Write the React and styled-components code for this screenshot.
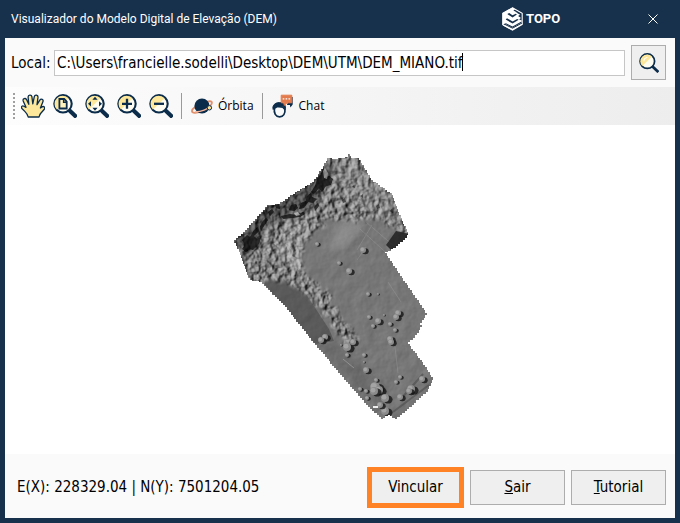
import React, { useLayoutEffect, useRef, useState } from 'react';
import styled, { createGlobalStyle } from 'styled-components';

const NAVY = '#17304b';
const INK = '#0b2c4a';
const CREAM = '#fde79b';

const GlobalStyle = createGlobalStyle`
  * {
    box-sizing: border-box;
  }
  body {
    margin: 0;
    background: ${NAVY};
    color: #000;
    font-family: 'DejaVu Sans Condensed', 'DejaVu Sans', sans-serif;
    font-stretch: condensed;
    font-size: 15px;
  }
  button, input {
    font: inherit;
    color: inherit;
  }
  svg {
    display: block;
  }
`;

const Window = styled.div`
  display: flex;
  flex-direction: column;
  min-height: 100vh;
  padding: 0 5px 5px;
  background: ${NAVY};
`;

const TitleBar = styled.header`
  display: flex;
  align-items: center;
  height: 38px;
  padding: 0 12px 0 6px;
  color: #fff;
`;

const Title = styled.h1`
  flex: 1;
  margin: 0;
  font: 400 12px/16px Roboto, sans-serif;
`;

const Brand = styled.div`
  display: flex;
  align-items: center;
  gap: 3px;
  width: 61px;
  margin-right: 80px;
  font: 700 13px/16px Roboto, sans-serif;
`;

const CloseButton = styled.button`
  display: grid;
  place-items: center;
  width: 20px;
  height: 20px;
  padding: 0;
  border: 0;
  background: none;
  color: #fff;
`;

const PathForm = styled.form`
  display: flex;
  align-items: center;
  gap: 6px;
  height: 49px;
  padding: 0 9px 0 6px;
  background: #fafafa;
`;

const PathLabel = styled.label`
  width: 37px;
  white-space: nowrap;
`;

const PathField = styled.div`
  position: relative;
  flex: 1;
  display: flex;
`;

const PathInput = styled.input`
  flex: 1;
  min-width: 0;
  height: 26px;
  padding: 0 2px;
  border: 1px solid #c6c6c6;
  background: #fff;
  outline: none;
  caret-color: transparent;
`;

const Caret = styled.span`
  position: absolute;
  top: 3px;
  width: 1px;
  height: 18px;
  background: #000;
  pointer-events: none;
`;

const Button = styled.button`
  display: grid;
  place-items: center;
  width: ${({ $square }) => ($square ? '35px' : '95px')};
  height: 35px;
  padding: 0;
  border: 1px solid #adadad;
  background: #efefef;
`;

const PrimaryButton = styled(Button)`
  width: 97px;
  height: 41px;
  border: 5px solid #ff8324;
`;

const Toolbar = styled.div`
  display: flex;
  align-items: center;
  gap: 8px;
  height: 38px;
  padding: 0 8px;
  background: linear-gradient(90deg, #fdfdfd, #ededed);
`;

const Grip = styled.span`
  width: 2px;
  height: 26px;
  margin-right: -2px;
  background: repeating-linear-gradient(#a0a0a0 0 2px, transparent 2px 4px);
`;

const Separator = styled.span`
  width: 1px;
  height: 26px;
  background: #9a9a9a;
`;

const ToolButton = styled.button`
  display: flex;
  align-items: center;
  gap: 4px;
  padding: 0;
  border: 0;
  background: none;
  font: 400 12px/16px 'Open Sans', 'Noto Sans', sans-serif;
`;

const Viewer = styled.main`
  flex: 1;
  display: grid;
  place-items: center;
  background: #fff;
`;

const Footer = styled.footer`
  display: flex;
  align-items: center;
  gap: 6px;
  height: 64px;
  padding: 2px 9px 0 12px;
  background: #fafafa;
`;

const Coordinates = styled.output`
  flex: 1;
`;

const TopoLogo = () => (
  <svg width="21" height="24" viewBox="0 0 21 24" fill="none" aria-hidden="true">
    <path d="M10.5.8 20.2 6.2v11.3l-9.7 5.7L.8 17.8V6.2z" stroke="#fff" strokeWidth="1.1" />
    <path d="M10.5.5.5 6v12l3.4-1.8 6.6 3.3 9.9-5.4-3.3-1.9 1.9-1.3-2.9-1.8 2-1.4-4.6-2.6L16 6 11.4 3.5l1.6-1.3z" fill="#fff" />
    <path d="m7.2 6 3.3 2.3L13.7 6.700l1.200.9-4.300 3L5.300 7.100zM5 11.200l5.600 3.200 4.600-2.500 1.500.9-6.100 3.700-6.900-3.900z" fill={NAVY} />
    <path d="m.8 18.500 3.100-1.200 6.600 3.400 9.700-5.500v2.300l-9.700 5.700z" fill="#fff" />
    <path d="m2.500 17.200 8 4 9.500-5.200" stroke={NAVY} strokeWidth="1" />
  </svg>
);

const CloseIcon = () => (
  <svg width="10" height="10" viewBox="0 0 10 10" stroke="currentColor">
    <path d="m.5.5 9 9m0-9-9 9" />
  </svg>
);

const Magnifier = ({ size = 24, plain, children }) => (
  <svg width={size} height={size} viewBox="0 0 24 24" fill="none">
    <path d="m16.5 16.5 5.5 5.2" stroke={INK} strokeWidth={plain ? 3.4 : 4.2} strokeLinecap="square" />
    <circle cx="10" cy="9.8" r="8.7" fill="#fffdf2" stroke={INK} strokeWidth="2.1" />
    <path d="M3.9 15.6A8 8 0 0 1 15.6 4.2z" fill={CREAM} />
    {plain && <path d="M5.8 10A4.6 4.6 0 0 1 10 5.5" stroke="#fff" strokeWidth="1.3" />}
    {children}
  </svg>
);

const HandIcon = () => (
  <svg width="24" height="24" viewBox="0 0 24 24">
    <path
      d="M7.200 23c-.4-2.400-1.600-3.800-3.400-5.600L.9 14.500c-1.200-1.600.3-3.200 2-2.300L5 13.300 2.200 6.900C1.500 4.700 4.400 3.600 5.500 5.500l2.300 4.800-.7-7.200C7 .7 10.500.4 10.900 2.700l.9 7.100 1.500-7.100c.6-2.400 3.900-1.800 3.700.7l-1 7.200 2.800-4.400c1.300-2.100 4-.8 3.100 1.500L19.400 14l1.600-1.100c1.800-1.200 3.600.8 2.300 2.300l-3.700 4.300c-.9 1.100-1 2-1.600 3.500z"
      fill={CREAM}
      stroke={INK}
      strokeWidth="1.3"
      strokeLinejoin="round"
    />
  </svg>
);

const PlanetIcon = () => (
  <svg width="24" height="24" viewBox="0 0 24 24" fill="none">
    <path d="M17.5 7.6c4.5-1.1 5.4.6 3.4 3.4-3.1 4.2-10.6 8-16 7.9-3.9-.1-4-2.8.1-5.8" stroke="#e0906c" strokeWidth="1.8" />
    <circle cx="12" cy="12" r="7.6" fill={INK} />
    <path d="M20.2 12c-2.900 3.500-8.900 5.600-15.400 5.900" stroke="#f5b59b" strokeWidth="1.3" />
    <circle cx="19.4" cy="13.8" r="2.200" fill={CREAM} stroke={INK} />
  </svg>
);

const ChatIcon = () => (
  <svg width="24" height="24" viewBox="0 0 24 24" fill="none">
    <path d="M19 3h2.700v7.500l-2.300 3-.5-2.600h-3" fill={INK} />
    <path d="M2.200 15.500C.9 11.700 4 8.500 8.400 8.600c4.500-.1 7 2.800 5.700 7l-1.700-3.300-7.700-.1z" fill={INK} stroke={INK} />
    <path d="M3.500 14.2 6 12.500l5.900.7 2 2.100c.6 4.200-1.500 7.500-5.300 7.500-3.900 0-6-3.700-5.100-8.600z" fill="#fafafa" stroke={INK} strokeWidth="1.7" />
    <path d="M10.2 1.200h10.600v7.600h-4.700l-3 2.600V8.800h-2.900z" fill="#e27c4e" stroke="#e27c4e" strokeLinejoin="round" />
    <path d="M11.700 4.900h1.600m1.300 0h1.600m1.300 0h1.600" stroke="#fff" strokeWidth="1.4" />
  </svg>
);

const OUTLINE = [
  [327, 158], [335, 159], [345, 157], [348, 154], [351, 158], [358, 158], [371, 180], [392, 195],
  [398, 212], [408, 235], [407, 238], [396, 248], [385, 253], [405, 283], [427, 315], [420, 325],
  [422, 327], [415, 338], [408, 344], [425, 367], [433, 380], [428, 392], [407, 411], [397, 419],
  [390, 415], [383, 419], [368, 405], [342, 375], [315, 343], [285, 305], [262, 282], [252, 280],
  [248, 275], [240, 252], [234, 240], [245, 230], [267, 205], [278, 204], [295, 192], [312, 182],
  [323, 166],
];

// x, y, radius
const BOULDERS = [
  [398, 313, 3], [396, 317, 3], [378, 321, 3], [373, 326, 2], [369, 317, 2], [368, 294, 2], [378, 294, 1],
  [390, 324, 2], [395, 330, 2], [390, 339, 3], [391, 342, 3], [325, 337, 3], [321, 340, 3], [347, 347, 4],
  [353, 342, 3], [341, 345, 1], [347, 355, 2], [364, 355, 2], [364, 362, 1], [366, 370, 3], [375, 387, 5],
  [379, 390, 4], [374, 391, 4], [376, 380, 2], [385, 398, 4], [400, 397, 3], [411, 389, 4], [409, 391, 3],
  [422, 379, 3], [400, 377, 2], [396, 382, 2], [360, 389, 2], [366, 391, 2], [367, 398, 2], [385, 411, 4],
  [380, 405, 3], [363, 250, 3], [349, 271, 3], [339, 263, 2], [317, 244, 2], [384, 315, 1],
];

// the raster edge: every segment becomes a staircase of small cells
const stairs = (points) =>
  points
    .map(([x, y], i) => {
      const [nx, ny] = points[(i + 1) % points.length];
      const n = Math.max(1, Math.round(Math.hypot(nx - x, ny - y) / 3));
      let d = i ? '' : `M${x} ${y}`;
      for (let k = 1; k <= n; k += 1) {
        d += `H${Math.round(x + ((nx - x) * k) / n)}V${Math.round(y + ((ny - y) * k) / n)}`;
      }
      return d;
    })
    .join('') + 'Z';

const Terrain = () => (
  <svg width="220" height="279" viewBox="230 150 220 279" role="img" aria-label="DEM">
    <defs>
      <clipPath id="edge">
        <path d={stairs(OUTLINE)} shapeRendering="crispEdges" />
      </clipPath>
      <filter id="soft" x="-20%" y="-20%" width="140%" height="140%">
        <feGaussianBlur stdDeviation="3" />
      </filter>
      <filter id="fine" x="-50%" y="-50%" width="200%" height="200%">
        <feGaussianBlur stdDeviation=".6" />
      </filter>
      <filter id="ragged" x="-20%" y="-20%" width="140%" height="140%">
        <feTurbulence type="fractalNoise" baseFrequency=".12" numOctaves="2" seed="5" />
        <feDisplacementMap in="SourceGraphic" scale="16" xChannelSelector="R" yChannelSelector="G" />
        <feGaussianBlur stdDeviation="1.8" />
      </filter>
      <filter id="rock" x="0" y="0" width="100%" height="100%" colorInterpolationFilters="sRGB">
        <feTurbulence type="fractalNoise" baseFrequency=".15" numOctaves="3" seed="21" />
        <feDiffuseLighting surfaceScale="2.6" diffuseConstant=".98" lightingColor="#c4c4c4">
          <feDistantLight azimuth="200" elevation="42" />
        </feDiffuseLighting>
      </filter>
      <filter id="ground" x="0" y="0" width="100%" height="100%" colorInterpolationFilters="sRGB">
        <feTurbulence type="fractalNoise" baseFrequency=".07" numOctaves="4" seed="3" />
        <feDiffuseLighting surfaceScale=".5" diffuseConstant=".84" lightingColor="#bebebe">
          <feDistantLight azimuth="215" elevation="48" />
        </feDiffuseLighting>
      </filter>
      <mask id="rough" maskUnits="userSpaceOnUse" x="230" y="150" width="220" height="279">
        <path
          d="M225 240 315 145 365 150 412 220 410 238 386 222 362 224 342 216 327 222 308 240 300 251 302 263 307 276 320 285 332 299 337 313 347 325 358 340 350 346 340 336 328 323 318 304 305 293 288 284 270 276 250 290 230 290z"
          fill="#fff"
          filter="url(#ragged)"
        />
      </mask>
    </defs>
    <g clipPath="url(#edge)">
      <rect x="230" y="150" width="220" height="279" filter="url(#ground)" />
      <path d="M260 279 280 277 306 294 329 329 334 341 315 344z" fill="#333" opacity=".42" filter="url(#fine)" />
      <path d="M315 343 335 342 386 390 380 412z" fill="#222" opacity=".13" filter="url(#soft)" />
      <path d="M334 230 349 218 363 224 346 246 328 253z" fill="#ddd" opacity=".2" filter="url(#soft)" />
      <path d="M357 250 372 225M366 222 402 253M360 229 392 258M366 247 357 260M388 282 401 302M395 347 398 373" stroke="#aaa" strokeWidth="1" opacity=".3" />
      <path d="M429 385 393 412M423 374 400 400" stroke="#444" strokeWidth="2" opacity=".5" />
      <path d="M343 359 354 368" stroke="#aaa" strokeWidth="1" opacity=".6" />
      <g mask="url(#rough)">
        <rect x="230" y="150" width="220" height="279" filter="url(#rock)" />
        <path d="M320 155 335 168 326 187 308 210 284 220 264 228 250 257 232 248 231 235 266 202z" fill="#000" opacity=".36" filter="url(#soft)" />
        <path d="M335 157 360 157 393 198 396 221 355 206 330 183z" fill="#aaa" opacity=".2" filter="url(#soft)" />
        <path d="M290 210 304 225 294 250 303 270 288 264 278 250z" fill="#ddd" opacity=".2" filter="url(#soft)" />
        <g fill="#080808" opacity=".75" filter="url(#fine)">
          <path d="m317 179 4-4 2-8 2 5-1 6 5-2 4 3-2 6-5 1-4 6-3-4-5 6-3-2 4-6zM307 196l4-3 1 4 5 2-4 4-5-1-4 6-5 1 2-6 5-2z" />
          <path d="m291 205 5-1 2 4-4 3-5-1zM281 216l9-2 6 1 7-3 2 2-5 3-8 1-9 1zM268 212l4-3 2 3-4 4zM275 205l4-1 1 5-4-1z" />
          <path d="m242 240 5-5 3 2 4-7 4-3 1 4-5 5 3 3 4-2-2 7-6 6-3-1-4 3-4-3 3-4zM262 222l4-4 2 2-4 6-3 5-1-4zM314 207l4-4 1 3-4 5z" />
          <path d="m342 200 3-2 1 4-3 1zM376 206l3-2 1 4-3 1zM360 196l3-2v4zM352 187l2-2 1 3zM389 211l3-2 1 4z" opacity=".7" />
        </g>
      </g>
      <path d="m396 231 14 3-2 6-15 12-7-7z" fill="#111" opacity=".7" filter="url(#fine)" />
      <g filter="url(#fine)">
        <path d="m285 244 4 2 4 5-1 5 6 3 3 6-2 5-4-2-1-7-6-4 1-6z" fill="#c9c9c9" opacity=".45" />
        <path d="m323 171 2-3 3 5-1 6-3-1z" fill="#bbb" opacity=".6" />
        <path d="m294 213 4-1 2 3-4 1z" fill="#ccc" opacity=".7" />
      </g>
      {BOULDERS.map(([x, y, r]) => (
        <g key={`${x}-${y}`}>
          <ellipse cx={x + r * 0.8} cy={y + r * 0.4} rx={r * 1.1} ry={r} fill="#151515" opacity=".8" filter="url(#fine)" />
          <circle cx={x} cy={y} r={r} fill="#8c8c8c" />
          <circle cx={x - r * 0.25} cy={y - r * 0.2} r={r * 0.6} fill="#a4a4a4" />
        </g>
      ))}
      <path d="M373 406h5v2h-5z" fill="#eee" />
    </g>
  </svg>
);

const App = () => {
  const [path, setPath] = useState('C:\\Users\\francielle.sodelli\\Desktop\\DEM\\UTM\\DEM_MIANO.tif');
  const [caret, setCaret] = useState(0);
  const input = useRef(null);

  useLayoutEffect(() => {
    const ctx = document.createElement('canvas').getContext('2d');
    ctx.font = getComputedStyle(input.current).font || '15px "DejaVu Sans Condensed"';
    setCaret(Math.round(ctx.measureText(path).width) + 3);
  }, [path]);

  return (
    <>
      <GlobalStyle />
      <Window>
        <TitleBar>
          <Title>Visualizador do Modelo Digital de Elevação (DEM)</Title>
          <Brand>
            <TopoLogo />
            TOPO
          </Brand>
          <CloseButton type="button" aria-label="Fechar">
            <CloseIcon />
          </CloseButton>
        </TitleBar>

        <PathForm onSubmit={(e) => e.preventDefault()}>
          <PathLabel htmlFor="local">Local:</PathLabel>
          <PathField>
            <PathInput id="local" ref={input} spellCheck={false} value={path} onChange={(e) => setPath(e.target.value)} />
            <Caret style={{ left: caret }} />
          </PathField>
          <Button $square type="submit" aria-label="Procurar">
            <Magnifier size={20} plain />
          </Button>
        </PathForm>

        <Toolbar role="toolbar">
          <Grip />
          <ToolButton aria-label="Mover">
            <HandIcon />
          </ToolButton>
          <ToolButton aria-label="Zoom na camada">
            <Magnifier>
              <path d="M6.4 5h4.8l2.5 2.6v6.9H6.4z" fill="#fff3bd" stroke={INK} strokeWidth="1.8" />
              <path d="M10.6 5v3.3h3" stroke={INK} strokeWidth="1.4" />
            </Magnifier>
          </ToolButton>
          <ToolButton aria-label="Zoom na extensão">
            <Magnifier>
              <path d="m10 2.8 2.6 3H7.4zm0 14 2.6-3H7.4zM3 9.8l3-2.6v5.2zm14 0-3-2.6v5.2z" fill={INK} />
            </Magnifier>
          </ToolButton>
          <ToolButton aria-label="Aproximar">
            <Magnifier>
              <path d="M10 4.8v10M5 9.8h10" stroke={INK} strokeWidth="2.3" />
            </Magnifier>
          </ToolButton>
          <ToolButton aria-label="Afastar">
            <Magnifier>
              <path d="M5 9.8h10" stroke={INK} strokeWidth="2.3" />
            </Magnifier>
          </ToolButton>
          <Separator />
          <ToolButton>
            <PlanetIcon />
            Órbita
          </ToolButton>
          <Separator />
          <ToolButton>
            <ChatIcon />
            Chat
          </ToolButton>
        </Toolbar>

        <Viewer>
          <Terrain />
        </Viewer>

        <Footer>
          <Coordinates>E(X): 228329.04 | N(Y): 7501204.05</Coordinates>
          <PrimaryButton type="button">Vincular</PrimaryButton>
          <Button type="button">
            <span><u>S</u>air</span>
          </Button>
          <Button type="button">
            <span><u>T</u>utorial</span>
          </Button>
        </Footer>
      </Window>
    </>
  );
};

export default App;
